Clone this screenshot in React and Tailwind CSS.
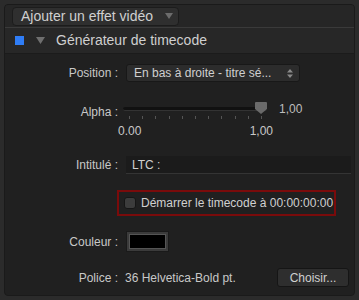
const font = { fontFamily: '"Liberation Sans", Arial, sans-serif' }

const Label = ({ children }) => (
  <div className="w-[114px] shrink-0 text-right pr-[1px] text-[12px] text-[#c8c8c8]">{children}</div>
)

export default function App() {
  const ticks = Array.from({ length: 11 })
  return (
    <div style={font} className="w-[359px] h-[300px] bg-[#2b2b2b] p-[4px] overflow-hidden">
      <div className="h-full flex flex-col rounded-[4px] border border-[#1a1a1a] bg-[#202020] overflow-hidden">
        {/* top bar */}
        <div className="h-[23px] shrink-0 bg-[#262626] flex items-center px-[7px] border-b border-[#3a3a3a]">
          <div className="h-[19px] w-[167px] rounded-[4px] bg-[#2f2f2f] border border-[#1c1c1c] flex items-center justify-between pl-[8px] pr-[5px] text-[14px] text-[#d0d0d0]">
            <span>Ajouter un effet vidéo</span>
            <svg width="8" height="6" viewBox="0 0 8 6"><path d="M0 0h8L4 6z" fill="#6c6c6c" /></svg>
          </div>
        </div>
        {/* header */}
        <div className="h-[26px] shrink-0 bg-[#272727] flex items-center pl-[10px] border-b border-[#1b1b1b]">
          <div className="w-[9px] h-[9px] bg-[#2f7df6]" />
          <svg className="ml-[12px]" width="9" height="7" viewBox="0 0 9 7"><path d="M0 0h9L4.5 7z" fill="#6f6f6f" /></svg>
          <span className="ml-[11px] text-[14px] text-[#cfcfcf]">Générateur de timecode</span>
        </div>
        {/* content */}
        <div className="flex-1 flex flex-col pt-[10px]">
          <div className="flex items-center gap-[7px] h-[18px]">
            <Label>Position :</Label>
            <div className="h-[18px] w-[174px] rounded-[3px] bg-[#2c2c2c] border border-[#181818] flex items-center justify-between pl-[7px] pr-[6px] text-[12px] text-[#d0d0d0]">
              <span>En bas à droite - titre sé...</span>
              <svg width="6" height="9" viewBox="0 0 6 9"><path d="M0 3.5L3 0l3 3.5zM0 5.5L3 9l3-3.5z" fill="#8a8a8a" /></svg>
            </div>
          </div>

          <div className="flex items-start gap-[6px] mt-[17px]">
            <div className="pt-[4px] -mr-[2px]"><Label>Alpha :</Label></div>
            <div className="flex flex-col w-[190px]">
              <div className="flex items-center h-[20px]">
                <div className="relative shrink-0 w-[144px] h-[4px] rounded-full bg-[#111111] border-b border-[#333]">
                  <svg className="absolute right-0 top-[-5px]" width="12" height="12" viewBox="0 0 12 12"><path d="M1 0h10a1 1 0 0 1 1 1v6l-6 5l-6-5V1a1 1 0 0 1 1-1z" fill="#6a6a6a" /></svg>
                </div>
                <span className="ml-[12px] text-[12px] text-[#bdbdbd]">1,00</span>
              </div>
              <div className="flex justify-between w-[133px] ml-[6px] mt-[-3px]">
                {ticks.map((_, i) => (<div key={i} className="w-[1px] h-[3px] bg-[#555]" />))}
              </div>
              <div className="flex justify-between w-[155px] ml-[-5px] mt-[3px] text-[12px] text-[#c8c8c8]">
                <span>0.00</span>
                <span>1,00</span>
              </div>
            </div>
          </div>

          <div className="flex items-center gap-[7px] mt-[16px]">
            <Label>Intitulé :</Label>
            <div className="h-[18px] w-[225px] bg-[#1b1b1b] border-b border-[#343434] flex items-center pl-[6px] text-[12px] text-[#d0d0d0]">LTC :</div>
          </div>

          <div className="ml-[112px] mt-[16px] w-[219px] h-[26px] border-2 border-[#7a0b0b] flex items-center pl-[5px] text-[12px] text-[#d0d0d0]">
            <div className="w-[12px] h-[12px] rounded-[3px] bg-[#3c3c3c] border border-[#161616] mr-[5px]" />
            <span>Démarrer le timecode à 00:00:00:00</span>
          </div>

          <div className="flex items-center gap-[7px] mt-[15px]">
            <Label>Couleur :</Label>
            <div className="w-[43px] h-[21px] bg-[#3b3b3b] border border-[#1a1a1a] p-[2px]">
              <div className="w-full h-full bg-black border border-[#555]" />
            </div>
          </div>

          <div className="flex items-center gap-[6px] mt-[16px]">
            <Label>Police :</Label>
            <span className="text-[12px] text-[#c8c8c8]">36 Helvetica-Bold pt.</span>
            <div className="ml-auto mr-[5px] h-[19px] w-[72px] rounded-[3px] bg-[#2e2e2e] border border-[#151515] flex items-center justify-center text-[12px] text-[#d0d0d0]">Choisir...</div>
          </div>
        </div>
      </div>
    </div>
  )
}
